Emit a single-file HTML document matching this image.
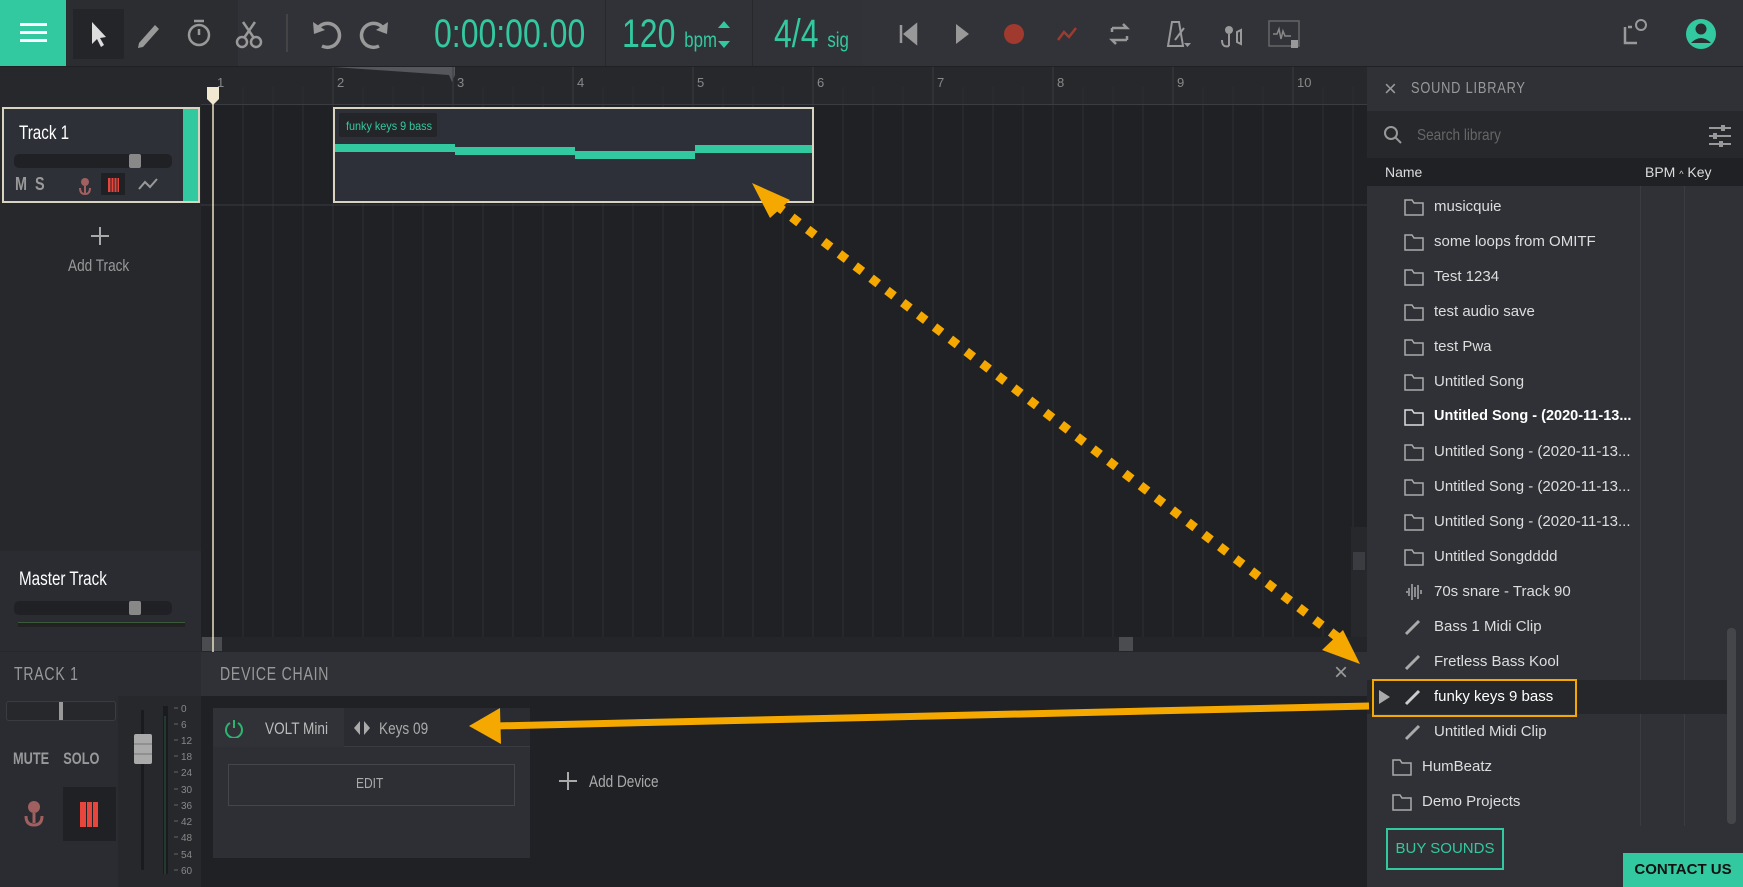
<!DOCTYPE html>
<html><head><meta charset="utf-8"><style>
*{box-sizing:border-box;margin:0;padding:0}
body{width:1743px;height:887px;overflow:hidden;background:#1f2125;font-family:"Liberation Sans",sans-serif;position:relative;color:#ccc}
.a{position:absolute}
.n{transform-origin:0 0;white-space:nowrap}
.teal{color:#33c9a0}
.r{position:absolute;left:0;width:360px;height:35px;font-size:15px;color:#ddd;line-height:35px;white-space:nowrap}
.r svg{position:absolute;top:8px}
</style></head><body>
<!-- toolbar -->
<div class="a" style="left:0;top:0;width:1743px;height:66px;background:#2b2d31"></div>
<div class="a" style="left:238px;top:0;width:624px;height:66px;background:#303237"></div>
<div class="a" style="left:862px;top:0;width:881px;height:66px;background:#313338"></div>
<div class="a" style="left:605px;top:0;width:1px;height:66px;background:#26282c"></div>
<div class="a" style="left:752px;top:0;width:1px;height:66px;background:#26282c"></div>
<div class="a" style="left:0;top:0;width:66px;height:66px;background:#33c9a0"></div>
<div class="a" style="left:20px;top:23px;width:27px;height:3px;background:#fff;box-shadow:0 8px 0 #fff,0 16px 0 #fff"></div>
<div class="a" style="left:73px;top:9px;width:51px;height:50px;background:#232529"></div>
<svg class="a" style="left:0;top:0" width="1743" height="66">
<path d="M92 22 L92 44 L97 39 L101 47 L104 45 L100 38 L106 37 Z" fill="#ddd"/>
<path d="M139 43 L155 25 L159 29 L143 47 L138 48 Z" fill="#999"/>
<circle cx="199" cy="35" r="10" fill="none" stroke="#999" stroke-width="2.5"/><path d="M194 21h10M199 35v-6" stroke="#999" stroke-width="2.5"/>
<circle cx="242" cy="42" r="5" fill="none" stroke="#999" stroke-width="2.5"/><circle cx="256" cy="42" r="5" fill="none" stroke="#999" stroke-width="2.5"/><path d="M243 22L254 38M255 22L244 38" stroke="#999" stroke-width="2.5"/>
<path d="M287 14v38" stroke="#444" stroke-width="2"/>
<path d="M318 28 A12 12 0 1 1 322 46" fill="none" stroke="#999" stroke-width="3.5"/><path d="M313 22 L314 34 L325 30 Z" fill="#999"/>
<path d="M383 28 A12 12 0 1 0 379 46" fill="none" stroke="#999" stroke-width="3.5"/><path d="M388 22 L387 34 L376 30 Z" fill="#999"/>
<path d="M718 28l6-7 6 7zM718 41l6 7 6-7z" fill="#33c9a0"/>
<path d="M901 25v18M916 25l-11 9 11 9z" fill="#999" stroke="#999" stroke-width="2.5"/>
<path d="M956 24l13 10-13 10z" fill="#999"/>
<circle cx="1014" cy="34" r="10" fill="#a03a2e"/>
<path d="M1058 40l6-8 5 5 7-9" fill="none" stroke="#a03a2e" stroke-width="2.5"/>
<path d="M1112 28h15l-4-4M1127 40h-15l4 4M1112 28v4M1127 40v-4" fill="none" stroke="#999" stroke-width="2.5"/>
<path d="M1168 46l4-24h7l4 24zM1175 40l9-12" fill="none" stroke="#999" stroke-width="2"/><path d="M1184 43h7l-3.5 4z" fill="#999"/>
<circle cx="1229" cy="30" r="4" fill="#999"/><path d="M1229 34v12M1222 40q0 8 7 6M1237 32l4 -2v14l-4-2z" fill="none" stroke="#999" stroke-width="2"/>
<rect x="1269" y="21" width="30" height="25" fill="none" stroke="#666" stroke-width="1.5"/><path d="M1273 34h4l2-5 2 10 2-8 2 5h6" fill="none" stroke="#888" stroke-width="1.5"/><rect x="1291" y="40" width="7" height="8" fill="#999"/>
<path d="M1625 27v16h12M1628 27h4" fill="none" stroke="#999" stroke-width="2.5"/><circle cx="1641" cy="25" r="5" fill="none" stroke="#999" stroke-width="2"/>
<circle cx="1701" cy="34" r="15" fill="#33c9a0"/><circle cx="1701" cy="29" r="5.5" fill="#2b2d31"/><path d="M1691 43q10-10 20 0" fill="#2b2d31"/>
</svg>
<div class="a n teal" style="left:434px;top:12px;font-size:40px;transform:scaleX(0.8)">0:00:00.00</div>
<div class="a n teal" style="left:622px;top:12px;font-size:40px;transform:scaleX(0.8)">120 <span style="font-size:21px">bpm</span></div>
<div class="a n teal" style="left:774px;top:12px;font-size:40px;transform:scaleX(0.8)">4/4 <span style="font-size:21px">sig</span></div>
<!-- left panel -->
<div class="a" style="left:0;top:67px;width:201px;height:585px;background:#26282c"></div>
<div class="a" style="left:2px;top:107px;width:198px;height:96px;background:#2d3036;border:2px solid #d9d4c0"></div>
<div class="a" style="left:183px;top:109px;width:15px;height:92px;background:#33c9a0"></div>
<div class="a n" style="left:19px;top:123px;font-size:19px;color:#fff;transform:scaleX(0.8)">Track 1</div>
<div class="a" style="left:14px;top:154px;width:158px;height:14px;border-radius:5px;background:#1f2125"></div>
<div class="a" style="left:129px;top:154px;width:12px;height:14px;border-radius:2px;background:#888"></div>
<div class="a n" style="left:15px;top:174px;font-size:18px;font-weight:bold;color:#999;transform:scaleX(0.8)">M&nbsp;&nbsp;S</div>
<div class="a" style="left:101px;top:173px;width:24px;height:22px;background:#1f2125"></div>
<div class="a" style="left:108px;top:178px;width:11px;height:14px;background:#e8453c"></div>
<svg class="a" style="left:75px;top:172px" width="90" height="26"><circle cx="10" cy="10" r="4" fill="#a06060"/><path d="M10 14v8M5 16q0 6 5 6q5 0 5-6" fill="none" stroke="#a06060" stroke-width="2"/><path d="M36 6v14M39 6v14M42 6v14" stroke="#1f2125" stroke-width="1"/><path d="M64 17l6-7 5 5 7-8" fill="none" stroke="#999" stroke-width="2"/></svg>
<div class="a" style="left:99px;top:227px;width:2px;height:18px;background:#aaa"></div><div class="a" style="left:91px;top:235px;width:18px;height:2px;background:#aaa"></div>
<div class="a n" style="left:68px;top:256px;font-size:17px;color:#999;transform:scaleX(0.8)">Add Track</div>
<div class="a" style="left:0;top:551px;width:201px;height:100px;background:#2a2c31"></div>
<div class="a n" style="left:19px;top:569px;font-size:19px;color:#fff;transform:scaleX(0.8)">Master Track</div>
<div class="a" style="left:14px;top:601px;width:158px;height:14px;border-radius:5px;background:#1f2125"></div>
<div class="a" style="left:129px;top:601px;width:12px;height:14px;border-radius:2px;background:#888"></div>
<div class="a" style="left:18px;top:622px;width:167px;height:5px;background:#222;border-top:1px solid #3a5a3a"></div>
<!-- timeline -->
<svg class="a" style="left:201px;top:67px" width="1166" height="585">
<rect width="1166" height="38" fill="#26282c"/>
<rect x="0" y="38" width="1166" height="545" fill="#1f2125"/>
<path d="M132 0h122v8l-3 7l-3-7" fill="#55575c"/>
<g stroke="#2c2e33" stroke-width="1">
<path d="M12 20v565M42 20v565M72 20v565M102 20v565M132 0v585M162 20v565M192 20v565M222 20v565M252 0v585M282 20v565M312 20v565M342 20v565M372 0v585M402 20v565M432 20v565M462 20v565M492 0v585M522 20v565M552 20v565M582 20v565M612 0v585M642 20v565M672 20v565M702 20v565M732 0v585M762 20v565M792 20v565M822 20v565M852 0v585M882 20v565M912 20v565M942 20v565M972 0v585M1002 20v565M1032 20v565M1062 20v565M1092 0v585M1122 20v565M1152 20v565"/>
</g>
<g stroke="#3a3c41"><path d="M132 0v38M252 0v38M372 0v38M492 0v38M612 0v38M732 0v38M852 0v38M972 0v38M1092 0v38M0 37.5h1166M0 138h1166"/></g>
<g fill="#888" font-size="13" font-family="Liberation Sans,sans-serif"><text x="16" y="20">1</text><text x="136" y="20">2</text><text x="256" y="20">3</text><text x="376" y="20">4</text><text x="496" y="20">5</text><text x="616" y="20">6</text><text x="736" y="20">7</text><text x="856" y="20">8</text><text x="976" y="20">9</text><text x="1096" y="20">10</text></g>
<rect x="1150" y="460" width="16" height="120" fill="#26282c"/><rect x="1152" y="485" width="12" height="18" fill="#3a3c41"/>
<rect x="0" y="570" width="1166" height="15" fill="#232529"/><rect x="1" y="570" width="20" height="14" fill="#4a4c50"/><rect x="918" y="570" width="14" height="14" fill="#4a4c50"/>
<path d="M12 28v557" stroke="#e8e0c0" stroke-width="1.5"/><path d="M6 20h12v12l-6 6-6-6z" fill="#f0e8d0"/>
<rect x="133" y="41" width="479" height="94" fill="#2d3038" stroke="#d9d4c0" stroke-width="2"/>
<rect x="138" y="46" width="98" height="24" rx="2" fill="#232529"/>
<text x="145" y="63" font-size="12" fill="#33c9a0" font-family="Liberation Sans,sans-serif" textLength="86" lengthAdjust="spacingAndGlyphs">funky keys 9 bass</text>
<g fill="#33c9a0"><rect x="134" y="77" width="120" height="8"/><rect x="254" y="80" width="120" height="8"/><rect x="374" y="84" width="120" height="8"/><rect x="494" y="78" width="117" height="8"/></g>
</svg>
<!-- bottom panel -->
<div class="a" style="left:0;top:652px;width:1367px;height:44px;background:#2f3136"></div>
<div class="a" style="left:0;top:652px;width:201px;height:44px;background:#2a2c31"></div>
<div class="a n" style="left:14px;top:664px;font-size:18px;color:#999;letter-spacing:1px;transform:scaleX(0.78)">TRACK 1</div>
<div class="a n" style="left:220px;top:664px;font-size:18px;color:#999;letter-spacing:1px;transform:scaleX(0.78)">DEVICE CHAIN</div>
<div class="a" style="left:1334px;top:659px;font-size:24px;color:#999">×</div>
<div class="a" style="left:0;top:696px;width:201px;height:191px;background:#2a2c31"></div>
<div class="a" style="left:118px;top:696px;width:83px;height:191px;background:#26282c"></div>
<div class="a" style="left:201px;top:696px;width:1166px;height:191px;background:#1f2125"></div>
<div class="a" style="left:6px;top:701px;width:110px;height:20px;background:#26282c;border:1px solid #3a3c41;border-radius:3px"></div>
<div class="a" style="left:59px;top:702px;width:4px;height:18px;background:#999"></div>
<div class="a n" style="left:13px;top:749px;font-size:17px;font-weight:bold;color:#999;transform:scaleX(0.75)">MUTE&nbsp;&nbsp;&nbsp;&nbsp;SOLO</div>
<svg class="a" style="left:22px;top:798px" width="24" height="36"><circle cx="12" cy="9" r="6" fill="#a06060"/><path d="M12 15v10M4 18q0 9 8 9q8 0 8-9" fill="none" stroke="#a06060" stroke-width="3"/></svg>
<div class="a" style="left:63px;top:787px;width:53px;height:54px;background:#1f2125"></div>
<div class="a" style="left:80px;top:802px;width:18px;height:25px;background:#e8453c"></div>
<div class="a" style="left:86px;top:802px;width:1px;height:25px;background:#1f2125;box-shadow:6px 0 0 #1f2125"></div>
<svg class="a" style="left:118px;top:696px" width="83" height="191">
<rect x="23" y="14" width="3" height="160" rx="1" fill="#1a1b1e"/>
<rect x="16" y="38" width="18" height="30" rx="2" fill="#aaa"/><path d="M16 48h18M16 58h18" stroke="#777"/>
<rect x="45" y="10" width="5" height="168" fill="#1a1b1e"/><path d="M47 20v158" stroke="#2f5a40"/>
<g fill="#888" font-size="10" font-family="Liberation Sans,sans-serif"><text x="63" y="16">0</text><text x="63" y="32">6</text><text x="63" y="48">12</text><text x="63" y="64">18</text><text x="63" y="80">24</text><text x="63" y="97">30</text><text x="63" y="113">36</text><text x="63" y="129">42</text><text x="63" y="145">48</text><text x="63" y="162">54</text><text x="63" y="178">60</text></g>
<g stroke="#666"><path d="M56 12h4M56 28h4M56 44h4M56 60h4M56 76h4M56 93h4M56 109h4M56 125h4M56 141h4M56 158h4M56 174h4"/></g>
</svg>
<div class="a" style="left:213px;top:708px;width:317px;height:150px;background:#2d2f34"></div>
<div class="a" style="left:213px;top:708px;width:131px;height:39px;background:#303237"></div>
<div class="a" style="left:344px;top:708px;width:186px;height:39px;background:#2a2c31;border-bottom:1px solid #3a3c41"></div>
<svg class="a" style="left:224px;top:718px" width="20" height="20"><path d="M6 5a8 8 0 1 0 8 0M10 2v8" fill="none" stroke="#2db36f" stroke-width="2"/></svg>
<div class="a n" style="left:265px;top:719px;font-size:17px;color:#bbb;transform:scaleX(0.8)">VOLT Mini</div>
<svg class="a" style="left:353px;top:719px" width="18" height="18"><path d="M7 2L1 9l6 7zM11 2l6 7-6 7z" fill="#aaa"/></svg>
<div class="a n" style="left:379px;top:719px;font-size:17px;color:#aaa;transform:scaleX(0.8)">Keys 09</div>
<div class="a" style="left:228px;top:764px;width:287px;height:42px;border:1px solid #44464b"></div>
<div class="a n" style="left:356px;top:775px;font-size:15px;color:#aaa;transform:scaleX(0.8)">EDIT</div>
<div class="a" style="left:567px;top:772px;width:2px;height:18px;background:#aaa"></div><div class="a" style="left:559px;top:780px;width:18px;height:2px;background:#aaa"></div>
<div class="a n" style="left:589px;top:772px;font-size:17px;color:#aaa;transform:scaleX(0.8)">Add Device</div>
<!-- library -->
<div class="a" style="left:1367px;top:67px;width:376px;height:820px;background:#2f3136">
<div class="a" style="left:17px;top:9px;font-size:22px;color:#999">×</div>
<div class="a n" style="left:44px;top:13px;font-size:16px;color:#999;letter-spacing:1px;transform:scaleX(0.8)">SOUND LIBRARY</div>
<div class="a" style="left:0;top:44px;width:376px;height:47px;background:#26282c"></div>
<svg class="a" style="left:16px;top:58px" width="20" height="20"><circle cx="8" cy="8" r="6" fill="none" stroke="#999" stroke-width="2"/><path d="M12 12l6 6" stroke="#999" stroke-width="2"/></svg>
<div class="a n" style="left:50px;top:60px;font-size:16px;color:#666;transform:scaleX(0.85)">Search library</div>
<svg class="a" style="left:340px;top:56px" width="26" height="26"><path d="M2 5h22M2 13h22M2 21h22" stroke="#999" stroke-width="2"/><rect x="14" y="2" width="4" height="6" fill="#999"/><rect x="6" y="10" width="4" height="6" fill="#999"/><rect x="12" y="18" width="4" height="6" fill="#999"/></svg>
<div class="a" style="left:0;top:91px;width:376px;height:28px;background:#1f2125"></div>
<div class="a" style="left:18px;top:97px;font-size:14px;color:#ddd">Name</div>
<div class="a" style="left:278px;top:97px;font-size:14px;color:#ddd">BPM <span style="font-size:9px">^</span> Key</div>
<div class="a" style="left:273px;top:119px;width:1px;height:640px;background:#3a3c41"></div>
<div class="a" style="left:317px;top:119px;width:1px;height:640px;background:#3a3c41"></div>
<div class="a" style="left:360px;top:561px;width:9px;height:196px;border-radius:4px;background:#444649"></div>
<div class="a" style="left:0;top:613px;width:360px;height:34px;background:#25272b"></div>
<div class="a" style="left:5px;top:612px;width:205px;height:38px;border:2px solid #f5a800"></div>
<div class="r" style="top:122px"><svg style="left:36px" width="22" height="20"><path d="M2 3h7l2 3h9v12H2z" fill="none" stroke="#aaa" stroke-width="1.5"/></svg><span style="position:absolute;left:67px">musicquie</span></div>
<div class="r" style="top:157px"><svg style="left:36px" width="22" height="20"><path d="M2 3h7l2 3h9v12H2z" fill="none" stroke="#aaa" stroke-width="1.5"/></svg><span style="position:absolute;left:67px">some loops from OMITF</span></div>
<div class="r" style="top:192px"><svg style="left:36px" width="22" height="20"><path d="M2 3h7l2 3h9v12H2z" fill="none" stroke="#aaa" stroke-width="1.5"/></svg><span style="position:absolute;left:67px">Test 1234</span></div>
<div class="r" style="top:227px"><svg style="left:36px" width="22" height="20"><path d="M2 3h7l2 3h9v12H2z" fill="none" stroke="#aaa" stroke-width="1.5"/></svg><span style="position:absolute;left:67px">test audio save</span></div>
<div class="r" style="top:262px"><svg style="left:36px" width="22" height="20"><path d="M2 3h7l2 3h9v12H2z" fill="none" stroke="#aaa" stroke-width="1.5"/></svg><span style="position:absolute;left:67px">test Pwa</span></div>
<div class="r" style="top:297px"><svg style="left:36px" width="22" height="20"><path d="M2 3h7l2 3h9v12H2z" fill="none" stroke="#aaa" stroke-width="1.5"/></svg><span style="position:absolute;left:67px">Untitled Song</span></div>
<div class="r" style="top:332px"><svg style="left:36px" width="22" height="20"><path d="M2 3h7l2 3h9v12H2z" fill="none" stroke="#ddd" stroke-width="1.5"/></svg><span style="position:absolute;left:67px;font-weight:bold;color:#fff;font-size:14.5px">Untitled Song - (2020-11-13...</span></div>
<div class="r" style="top:367px"><svg style="left:36px" width="22" height="20"><path d="M2 3h7l2 3h9v12H2z" fill="none" stroke="#aaa" stroke-width="1.5"/></svg><span style="position:absolute;left:67px">Untitled Song - (2020-11-13...</span></div>
<div class="r" style="top:402px"><svg style="left:36px" width="22" height="20"><path d="M2 3h7l2 3h9v12H2z" fill="none" stroke="#aaa" stroke-width="1.5"/></svg><span style="position:absolute;left:67px">Untitled Song - (2020-11-13...</span></div>
<div class="r" style="top:437px"><svg style="left:36px" width="22" height="20"><path d="M2 3h7l2 3h9v12H2z" fill="none" stroke="#aaa" stroke-width="1.5"/></svg><span style="position:absolute;left:67px">Untitled Song - (2020-11-13...</span></div>
<div class="r" style="top:472px"><svg style="left:36px" width="22" height="20"><path d="M2 3h7l2 3h9v12H2z" fill="none" stroke="#aaa" stroke-width="1.5"/></svg><span style="position:absolute;left:67px">Untitled Songdddd</span></div>
<div class="r" style="top:507px"><svg style="left:36px" width="22" height="20"><path d="M3 10h2M6 6v8M9 2v16M12 5v10M15 3v14M18 8v4" stroke="#aaa" stroke-width="1.5"/></svg><span style="position:absolute;left:67px">70s snare - Track 90</span></div>
<div class="r" style="top:542px"><svg style="left:36px" width="22" height="20"><path d="M3 17L16 4" stroke="#aaa" stroke-width="3"/></svg><span style="position:absolute;left:67px">Bass 1 Midi Clip</span></div>
<div class="r" style="top:577px"><svg style="left:36px" width="22" height="20"><path d="M3 17L16 4" stroke="#aaa" stroke-width="3"/></svg><span style="position:absolute;left:67px">Fretless Bass Kool</span></div>
<div class="r" style="top:612px"><svg style="left:11px;top:10px" width="14" height="16"><path d="M1 1v14l11-7z" fill="#aaa"/></svg><svg style="left:36px" width="22" height="20"><path d="M3 17L16 4" stroke="#ccc" stroke-width="3"/></svg><span style="position:absolute;left:67px;color:#fff">funky keys 9 bass</span></div>
<div class="r" style="top:647px"><svg style="left:36px" width="22" height="20"><path d="M3 17L16 4" stroke="#aaa" stroke-width="3"/></svg><span style="position:absolute;left:67px">Untitled Midi Clip</span></div>
<div class="r" style="top:682px"><svg style="left:24px" width="22" height="20"><path d="M2 3h7l2 3h9v12H2z" fill="none" stroke="#aaa" stroke-width="1.5"/></svg><span style="position:absolute;left:55px">HumBeatz</span></div>
<div class="r" style="top:717px"><svg style="left:24px" width="22" height="20"><path d="M2 3h7l2 3h9v12H2z" fill="none" stroke="#aaa" stroke-width="1.5"/></svg><span style="position:absolute;left:55px">Demo Projects</span></div>
<div class="a" style="left:19px;top:761px;width:118px;height:42px;border:2px solid #33c9a0;color:#33c9a0;font-size:15px;text-align:center;line-height:38px">BUY SOUNDS</div>
<div class="a" style="left:256px;top:786px;width:120px;height:34px;background:#33c9a0;color:#111;font-size:15px;font-weight:bold;text-align:center;line-height:34px">CONTACT US</div>
</div>
<!-- arrows -->
<svg class="a" style="left:0;top:0" width="1743" height="887">
<path d="M776 205 L1345 643" stroke="#f5a800" stroke-width="9" stroke-dasharray="9 11"/>
<path d="M752 183 L790 200 L770 218 Z" fill="#f5a800"/>
<path d="M1360 664 L1322 650 L1343 630 Z" fill="#f5a800"/>
<path d="M1369 706 L495 726" stroke="#f5a800" stroke-width="7"/>
<path d="M469 726 L500 708 L501 744 Z" fill="#f5a800"/>
</svg>
</body></html>
